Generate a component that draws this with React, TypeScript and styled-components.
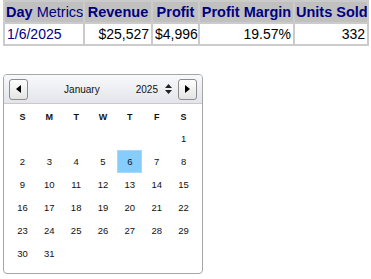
import React from "react";
import styled, { createGlobalStyle } from "styled-components";

const Global = createGlobalStyle`
  html, body { margin: 0; padding: 0; background: #ffffff; }
  body { font-family: "Liberation Sans", Arial, sans-serif; }
`;

const Page = styled.div`
  padding: 0 0 0 3px;
  display: flex;
  flex-direction: column;
  align-items: flex-start;
  gap: 28px;
`;

const Table = styled.table`
  border-collapse: separate;
  border-spacing: 2px;
  background: #cbcbcb;
  table-layout: fixed;
  width: 366px;
`;

const HeadCell = styled.th<{ $w: number; $align?: string }>`
  width: ${(p) => p.$w}px;
  height: 20px;
  padding: 0 1px;
  background: #c0c0c0;
  color: #000080;
  font-size: 14.5px;
  font-weight: bold;
  text-align: ${(p) => p.$align || "center"};
  white-space: nowrap;
  overflow: hidden;
  box-sizing: border-box;
`;

const Light = styled.span`
  font-weight: normal;
`;

const DataCell = styled.td<{ $link?: boolean; $align?: string }>`
  height: 20px;
  padding: 0 2px;
  background: #ffffff;
  color: ${(p) => (p.$link ? "#000080" : "#000000")};
  font-size: 14px;
  text-align: ${(p) => p.$align || "right"};
  white-space: nowrap;
  overflow: hidden;
  box-sizing: border-box;
`;

const Calendar = styled.div`
  width: 200px;
  height: 200px;
  box-sizing: border-box;
  border: 1px solid #a6a6a6;
  border-radius: 4px;
  background: #ffffff;
  overflow: hidden;
  font-family: "Liberation Sans", Arial, sans-serif;
  display: flex;
  flex-direction: column;
`;

const CalHeader = styled.div`
  height: 29px;
  box-sizing: border-box;
  border-bottom: 1px solid #c9c9c9;
  background: linear-gradient(#f8f9fb, #e2e5ea);
  display: flex;
  align-items: center;
  padding: 0 5px;
`;

const NavButton = styled.button`
  width: 19px;
  height: 21px;
  box-sizing: border-box;
  border: 1px solid #8c8c8c;
  border-radius: 3px;
  background: linear-gradient(#fefefe, #e4e4e4);
  padding: 0;
  display: flex;
  align-items: center;
  justify-content: center;
`;

const MonthLabel = styled.div`
  flex: 1;
  text-align: center;
  font-size: 10px;
  color: #111;
`;

const YearGroup = styled.div`
  display: flex;
  align-items: center;
  gap: 7px;
  margin-right: 6px;
  font-size: 10px;
  color: #111;
`;

const Grid = styled.div`
  display: grid;
  grid-template-columns: repeat(7, 1fr);
  grid-auto-rows: 23px;
  padding: 0 5px;
`;

const DayName = styled.div`
  height: 26px;
  display: flex;
  align-items: center;
  justify-content: center;
  font-size: 9px;
  font-weight: bold;
  color: #111;
`;

const DayCell = styled.div<{ $selected?: boolean }>`
  margin: 0 1px;
  display: flex;
  align-items: center;
  justify-content: center;
  font-size: 9.5px;
  color: #111;
  background: ${(p) => (p.$selected ? "#87cdfb" : "transparent")};
  box-sizing: border-box;
  border: 1px solid ${(p) => (p.$selected ? "#a3d9fb" : "transparent")};
`;

const Tri = ({ dir }: { dir: "left" | "right" }) => (
  <svg width="5" height="8" viewBox="0 0 5 8">
    {dir === "left" ? <polygon points="5,0 5,8 0,4" fill="#000" /> : <polygon points="0,0 0,8 5,4" fill="#000" />}
  </svg>
);

const Spinner = () => (
  <svg width="7" height="10" viewBox="0 0 7 10">
    <polygon points="3.5,0 7,4 0,4" fill="#222" />
    <polygon points="0,6 7,6 3.5,10" fill="#222" />
  </svg>
);

const days: (number | null)[] = [null, null, null, null, null, null, 1];
for (let d = 2; d <= 31; d++) days.push(d);

export default function App() {
  return (
    <>
      <Global />
      <Page>
        <Table>
          <thead>
            <tr>
              <HeadCell $w={78} $align="left">
                Day <Light>Metrics</Light>
              </HeadCell>
              <HeadCell $w={66}>Revenue</HeadCell>
              <HeadCell $w={45}>Profit</HeadCell>
              <HeadCell $w={93}>Profit Margin</HeadCell>
              <HeadCell $w={72}>Units Sold</HeadCell>
            </tr>
          </thead>
          <tbody>
            <tr>
              <DataCell $link $align="left">1/6/2025</DataCell>
              <DataCell>$25,527</DataCell>
              <DataCell>$4,996</DataCell>
              <DataCell>19.57%</DataCell>
              <DataCell>332</DataCell>
            </tr>
          </tbody>
        </Table>
        <Calendar>
          <CalHeader>
            <NavButton aria-label="Previous month">
              <Tri dir="left" />
            </NavButton>
            <MonthLabel>January</MonthLabel>
            <YearGroup>
              <span>2025</span>
              <Spinner />
            </YearGroup>
            <NavButton aria-label="Next month">
              <Tri dir="right" />
            </NavButton>
          </CalHeader>
          <Grid>
            {["S", "M", "T", "W", "T", "F", "S"].map((n, i) => (
              <DayName key={i}>{n}</DayName>
            ))}
            {days.map((d, i) => (
              <DayCell key={i} $selected={d === 6}>
                {d ?? ""}
              </DayCell>
            ))}
          </Grid>
        </Calendar>
      </Page>
    </>
  );
}
